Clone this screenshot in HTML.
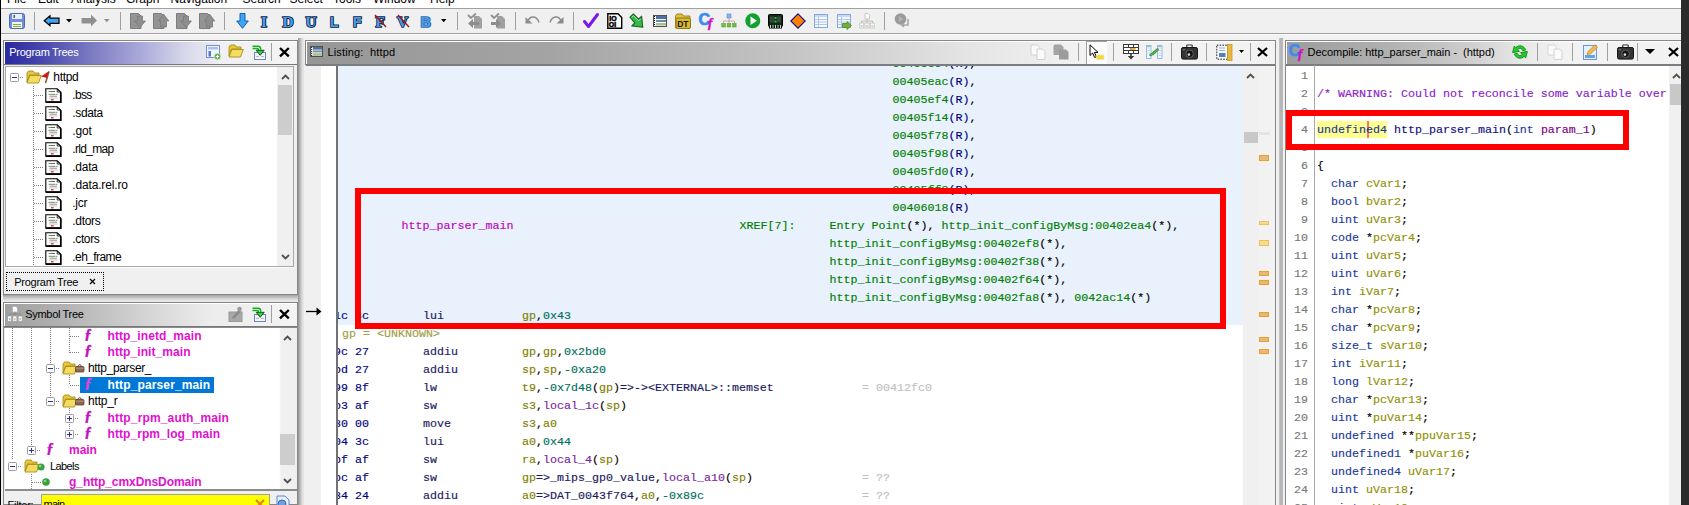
<!DOCTYPE html><html><head><meta charset="utf-8"><title>Ghidra</title><style>
html,body{margin:0;padding:0}
body{width:1689px;height:505px;overflow:hidden;position:relative;background:#f0f0f0;font-family:"Liberation Sans",sans-serif;font-size:12px;color:#000}
.a{position:absolute}
.t{position:absolute;white-space:pre;line-height:18px;height:18px}
.m{position:absolute;white-space:pre;font-family:"Liberation Mono",monospace;font-size:11.67px;line-height:18px;height:18px;margin-top:1px;-webkit-text-stroke:0.15px}
.sep{position:absolute;width:1px;background:#a0a0a0}
.g{color:#008000}.b{color:#000080}.k{color:#000}.p{color:#c000c0}.o{color:#808000}.tl{color:#00705c}.pu{color:#7a1fa0}.gy{color:#c0c0c0}.dk{color:#1a1a60}
.bm{font-weight:bold;color:#e010d0}
.ty{color:#1a3a9a}.vr{color:#909000}.fn{color:#101080}.pu2{color:#800080}
.L{position:absolute;font-family:"Liberation Serif",serif;font-weight:bold;font-size:15.5px;line-height:18px;color:#3d9ff2;-webkit-text-stroke:1.7px #141430;paint-order:stroke fill}
svg{position:absolute;overflow:visible}
</style></head><body>
<div class="a" style="left:0px;top:0px;width:1689px;height:8px;background:#fff;"></div>
<div class="t" style="left:7px;top:-10px;font-size:12px">File</div>
<div class="t" style="left:38px;top:-10px;font-size:12px">Edit</div>
<div class="t" style="left:71px;top:-10px;font-size:12px">Analysis</div>
<div class="t" style="left:126px;top:-10px;font-size:12px">Graph</div>
<div class="t" style="left:170.5px;top:-10px;font-size:12px">Navigation</div>
<div class="t" style="left:242.6px;top:-10px;font-size:12px">Search</div>
<div class="t" style="left:289.5px;top:-10px;font-size:12px">Select</div>
<div class="t" style="left:333px;top:-10px;font-size:12px">Tools</div>
<div class="t" style="left:373px;top:-10px;font-size:12px">Window</div>
<div class="t" style="left:430px;top:-10px;font-size:12px">Help</div>
<div class="a" style="left:0px;top:8px;width:1689px;height:1px;background:#a0a0a0;"></div>
<div class="a" style="left:0px;top:9px;width:1689px;height:24px;background:#f0f0f0;"></div>
<div class="a" style="left:0px;top:33px;width:1689px;height:1px;background:#a0a0a0;"></div>
<div class="a" style="left:0px;top:34px;width:1689px;height:1px;background:#fcfcfc;"></div>
<div class="a" style="left:0px;top:35px;width:1689px;height:5px;background:#f2f2f2;"></div>
<svg style="left:9px;top:13px" width="16" height="16" viewBox="0 0 16 16"><rect x="0.5" y="0.5" width="15" height="15" rx="2" fill="#6f8fd8" stroke="#4a68b8"/><rect x="3" y="1" width="10" height="5" fill="#e8eefc"/><rect x="4.5" y="2" width="1.5" height="3" fill="#556"/><rect x="3" y="9" width="10" height="6" fill="#f4f8f0"/><rect x="4" y="11" width="8" height="1" fill="#80b040"/><rect x="4" y="13" width="8" height="1" fill="#80b040"/></svg>
<div class="sep" style="left:34px;top:12px;height:18px;background:#a0a0a0"></div>
<svg style="left:43px;top:14px" width="18" height="14" viewBox="0 0 18 14"><path d="M1.2 6.8 L7 1.8 L7 4.2 L16 4.2 L16 9.4 L7 9.4 L7 11.8 Z" fill="#3ea4f4" stroke="#000" stroke-width="1.2" stroke-linejoin="miter"/></svg>
<svg style="left:66px;top:19px" width="6" height="4" viewBox="0 0 6 4"><path d="M0 0 L6 0 L3 3.5Z" fill="#000"/></svg>
<svg style="left:81px;top:14px" width="17" height="14" viewBox="0 0 17 14"><path d="M16 6.5 L10 0.5 L10 4 L0.5 4 L0.5 9.5 L10 9.5 L10 12.5 Z" fill="#909090"/></svg>
<svg style="left:103.5px;top:19px" width="6" height="4" viewBox="0 0 6 4"><path d="M0 0 L5.6 0 L2.8 3.2Z" fill="#909090"/></svg>
<div class="sep" style="left:120px;top:12px;height:18px;background:#a0a0a0"></div>
<svg style="left:130px;top:13px" width="16" height="16" viewBox="0 0 16 16"><path d="M0.5 0.5 H8.5 L11 3 V15.5 H0.5Z" fill="#949494" stroke="#7c7c7c"/><path d="M7.5 3 H12.5 V8 H15.5 L10 14.5 L4.5 8 H7.5Z" fill="#8e8e8e" stroke="#7a7a7a" stroke-width="0.8"/></svg>
<svg style="left:153px;top:13px" width="16" height="16" viewBox="0 0 16 16"><path d="M0.5 0.5 H8.5 L11 3 V15.5 H0.5Z" fill="#949494" stroke="#7c7c7c"/><path d="M10.5 1 L15.8 8 H13.5 V14 H7.5 V8 H5.2Z" fill="#8e8e8e" stroke="#7a7a7a" stroke-width="0.8"/></svg>
<svg style="left:176px;top:13px" width="16" height="16" viewBox="0 0 16 16"><path d="M0.5 0.5 H8.5 L11 3 V15.5 H0.5Z" fill="#949494" stroke="#7c7c7c"/><path d="M7.5 3 H12.5 V8 H15.5 L10 14.5 L4.5 8 H7.5Z" fill="#8e8e8e" stroke="#7a7a7a" stroke-width="0.8"/></svg>
<svg style="left:199px;top:13px" width="16" height="16" viewBox="0 0 16 16"><path d="M0.5 0.5 H8.5 L11 3 V15.5 H0.5Z" fill="#949494" stroke="#7c7c7c"/><path d="M10.5 1 L15.8 8 H13.5 V14 H7.5 V8 H5.2Z" fill="#8e8e8e" stroke="#7a7a7a" stroke-width="0.8"/></svg>
<div class="sep" style="left:224px;top:12px;height:18px;background:#a0a0a0"></div>
<svg style="left:236px;top:13px" width="13" height="16" viewBox="0 0 13 16"><path d="M4 0.5 H9 V8 H12.3 L6.5 15.3 L0.7 8 H4Z" fill="#3ea4f4" stroke="#1060b0" stroke-width="1"/></svg>
<div class="L" style="left:261px;top:12.5px;">I</div>
<div class="L" style="left:282.5px;top:12.5px;">D</div>
<div class="L" style="left:305.5px;top:12.5px;">U</div>
<div class="L" style="left:330px;top:12.5px;font-family:'Liberation Sans',sans-serif;font-size:14px;">L</div>
<div class="L" style="left:353px;top:12.5px;font-family:'Liberation Sans',sans-serif;font-size:14px;">F</div>
<div class="L" style="left:375.5px;top:12.5px;">F</div>
<div class="L" style="left:397px;top:12.5px;">V</div>
<div class="L" style="left:420.5px;top:12.5px;font-family:'Liberation Sans',sans-serif;font-size:14.5px;-webkit-text-stroke:1.7px #2c68b0;color:#4a9ae8">B</div>
<svg style="left:374px;top:14px" width="14" height="14" viewBox="0 0 14 14"><path d="M1 1 L12 13" stroke="#a01818" stroke-width="1.4"/></svg>
<svg style="left:397px;top:14px" width="14" height="14" viewBox="0 0 14 14"><path d="M1 1 L12 13" stroke="#a01818" stroke-width="1.4"/></svg>
<svg style="left:441px;top:19px" width="6" height="4" viewBox="0 0 6 4"><path d="M0 0 L5.4 0 L2.7 3.2Z" fill="#000"/></svg>
<div class="sep" style="left:457px;top:12px;height:18px;background:#a0a0a0"></div>
<svg style="left:467px;top:13px" width="16" height="16" viewBox="0 0 16 16"><path d="M7 3 H12 L15 6 V15.5 H7Z" fill="#a0a0a0"/><path d="M1 2 L4 5 L9 0.5" stroke="#909090" stroke-width="1.8" fill="none"/><path d="M1 10.5 L6 6 V9 H12 V12 H6 V15Z" fill="#8c8c8c"/></svg>
<svg style="left:490px;top:13px" width="16" height="16" viewBox="0 0 16 16"><path d="M7 3 H12 L15 6 V15.5 H7Z" fill="#a0a0a0"/><path d="M1 2 L4 5 L9 0.5" stroke="#909090" stroke-width="1.8" fill="none"/><path d="M11 10.5 L6 6 V9 H1 V12 H6 V15Z" fill="#8c8c8c"/></svg>
<div class="sep" style="left:515px;top:12px;height:18px;background:#a0a0a0"></div>
<svg style="left:525px;top:15px" width="16" height="11" viewBox="0 0 16 11"><path d="M3 6 C5 0.5 12 0.5 14 7.5" stroke="#8c8c8c" stroke-width="1.4" fill="none"/><path d="M0.5 2 V8.5 H7.5Z" fill="#8c8c8c"/></svg>
<svg style="left:548px;top:15px" width="16" height="11" viewBox="0 0 16 11"><path d="M13 6 C11 0.5 4 0.5 2 7.5" stroke="#8c8c8c" stroke-width="1.4" fill="none"/><path d="M15.5 2 V8.5 H8.5Z" fill="#8c8c8c"/></svg>
<div class="sep" style="left:573px;top:12px;height:18px;background:#a0a0a0"></div>
<svg style="left:583px;top:13px" width="17" height="16" viewBox="0 0 17 16"><path d="M1.5 8.5 L5.5 13.5 L14.5 1.5" stroke="#7a18e8" stroke-width="3" fill="none" stroke-linejoin="round" stroke-linecap="round"/></svg>
<svg style="left:607px;top:13px" width="16" height="16" viewBox="0 0 16 16"><path d="M0.8 0.8 H11 L14.7 4.5 V15.2 H0.8Z" fill="#fff" stroke="#000" stroke-width="1.4"/><text x="2.2" y="7.6" font-family="Liberation Sans" font-weight="bold" font-size="7" fill="#000" stroke="#000" stroke-width="0.5">IO</text><text x="1.8" y="14" font-family="Liberation Sans" font-weight="bold" font-size="7" fill="#000" stroke="#000" stroke-width="0.5">OI</text></svg>
<svg style="left:629px;top:13px" width="16" height="16" viewBox="0 0 16 16"><path d="M1 4.2 L4.4 1 L9.6 6.2 L12.6 3.2 L13.8 14.2 L2.8 13 L5.8 10 Z" fill="#38b848" stroke="#146424" stroke-width="1.1" stroke-linejoin="round"/><path d="M2.6 4.3 L4.4 2.6 L9.6 7.8 L11.6 5.8" fill="none" stroke="#c8f0c8" stroke-width="0.8"/></svg>
<svg style="left:653px;top:15px" width="14" height="12" viewBox="0 0 14 12"><rect x="0.5" y="0.5" width="13" height="11" fill="#f8f8f8" stroke="#505050"/><rect x="3" y="1" width="10" height="3" fill="#5070a0"/><rect x="3" y="5" width="10" height="2" fill="#7088a8"/><rect x="3" y="8" width="10" height="2.5" fill="#a8c090"/><path d="M1.5 1 V11" stroke="#000" stroke-dasharray="1 1"/></svg>
<svg style="left:675px;top:13px" width="16" height="16" viewBox="0 0 16 16"><path d="M0.5 3 L2 1 H7 L8.5 3 H15 V15 H0.5Z" fill="#e0c040" stroke="#a08820"/><rect x="1" y="5" width="14.5" height="10.5" rx="1.5" fill="#d8b830" stroke="#8a7418"/><text x="2.2" y="14" font-family="Liberation Sans" font-weight="bold" font-size="8.5" fill="#201800">DT</text></svg>
<div class="a" style="left:698.5px;top:11px;font:bold 16px/18px 'Liberation Sans',sans-serif;color:#3c8cf0;-webkit-text-stroke:0.7px #3c8cf0">C</div>
<div class="a" style="left:708px;top:16px;font:italic bold 13px/14px 'Liberation Serif',serif;color:#d010c8;-webkit-text-stroke:0.5px #d010c8">f</div>
<svg style="left:721px;top:13px" width="16" height="16" viewBox="0 0 16 16"><rect x="6" y="1" width="4" height="4" fill="#88b8f0" stroke="#5088d0" stroke-width="0.6"/><path d="M8 5 V8 M2.5 10 V8 H13.5 V10 M8 8 V10" stroke="#d09090" stroke-width="0.8" fill="none"/><rect x="0.8" y="10.5" width="3.5" height="3.5" fill="#70c040" stroke="#50a030" stroke-width="0.6"/><rect x="6.2" y="10.5" width="3.5" height="3.5" fill="#70c040" stroke="#50a030" stroke-width="0.6"/><rect x="11.6" y="10.5" width="3.5" height="3.5" fill="#70c040" stroke="#50a030" stroke-width="0.6"/></svg>
<svg style="left:744.5px;top:13px" width="15.5" height="15.5" viewBox="0 0 15.5 15.5"><circle cx="7.75" cy="7.75" r="7.5" fill="#12a030"/><path d="M5.5 3.5 L12 7.75 L5.5 12Z" fill="#fff"/></svg>
<svg style="left:768px;top:13.5px" width="15" height="15" viewBox="0 0 15 15"><rect x="0.5" y="0.5" width="14" height="12" rx="1" fill="#083010" stroke="#000"/><rect x="2" y="2.5" width="4" height="6" fill="#404040"/><rect x="9" y="2.5" width="4" height="6" fill="#404040"/><rect x="6.5" y="3" width="2" height="2" fill="#30c040"/><rect x="6.5" y="6.5" width="2" height="2" fill="#30c040"/><path d="M1 12 H14 V14.5 H1Z" fill="#000"/><path d="M2.5 11 V14 M5 11 V14 M7.5 11 V14 M10 11 V14 M12.5 11 V14" stroke="#e8e8e8" stroke-width="0.9"/></svg>
<svg style="left:790px;top:13px" width="16" height="16" viewBox="0 0 16 16"><path d="M8 0.8 L15.2 8 L8 15.2 L0.8 8Z" fill="#ff8000" stroke="#10108a" stroke-width="1.1"/></svg>
<svg style="left:814px;top:14px" width="14" height="14" viewBox="0 0 14 14"><rect x="0.5" y="0.5" width="13" height="13" fill="#f4f8ff" stroke="#88a8e0"/><rect x="1" y="1" width="12" height="2" fill="#c8d8f4"/><path d="M1 5.5 H13 M1 8 H13 M1 10.5 H13 M4.5 3 V13" stroke="#a8c0e8" stroke-width="0.9"/></svg>
<svg style="left:837px;top:14px" width="14" height="14" viewBox="0 0 14 14"><rect x="0.5" y="0.5" width="13" height="13" fill="#f4f8ff" stroke="#88a8e0"/><rect x="1" y="1" width="12" height="2" fill="#c8d8f4"/><path d="M1 5.5 H13 M1 8 H13 M1 10.5 H13 M4.5 3 V13" stroke="#a8c0e8" stroke-width="0.9"/></svg>
<svg style="left:842px;top:21px" width="10" height="9" viewBox="0 0 10 9"><path d="M0.5 2.5 H5 V0.5 L9.5 4.5 L5 8.5 V6.5 H0.5Z" fill="#70b030" stroke="#508820" stroke-width="0.8"/></svg>
<svg style="left:859px;top:13px" width="16" height="16" viewBox="0 0 16 16"><path d="M6 0.5 H9 L10.5 2 V6 H6Z" fill="#fafafa" stroke="#c0c0c0" stroke-width="0.8"/><path d="M8 6 V8 M2.5 10 V8 H13.5 V10 M8 8 V10" stroke="#b8b8b8" stroke-width="0.9" fill="none"/><rect x="0.8" y="10" width="4" height="5" fill="#fafafa" stroke="#c0c0c0" stroke-width="0.8"/><rect x="6" y="10" width="4" height="5" fill="#fafafa" stroke="#c0c0c0" stroke-width="0.8"/><rect x="11.2" y="10" width="4" height="5" fill="#fafafa" stroke="#c0c0c0" stroke-width="0.8"/><rect x="2" y="12" width="1.5" height="2" fill="#c0d8a0"/><rect x="7.2" y="12" width="1.5" height="2" fill="#f0b090"/><rect x="12.4" y="12" width="1.5" height="2" fill="#c0d8a0"/></svg>
<div class="sep" style="left:884px;top:12px;height:18px;background:#a0a0a0"></div>
<svg style="left:894px;top:13px" width="16" height="16" viewBox="0 0 16 16"><circle cx="6.5" cy="6" r="5.8" fill="#9a9a9a"/><path d="M5 3 L9.5 6 L5 9Z" fill="#b4b4b4"/><path d="M14 6 V12 H8 M10 10 L7.5 12 L10 14" stroke="#a8a8a8" stroke-width="1.6" fill="none"/></svg>
<div class="a" style="left:3px;top:40px;width:295px;height:255px;background:#f0f0f0;border:1px solid #868686;box-sizing:border-box"></div>
<div class="a" style="left:4px;top:41px;width:293px;height:24px;background:#fff;"></div>
<div class="a" style="left:5px;top:42px;width:292px;height:22px;background:linear-gradient(93deg,#2828a0 0%,#4848ae 13%,#7c7cc4 30%,#a8a8d8 46%,#d8d8ec 62%,#f0f0f4 74%,#f4f4f4 100%);"></div>
<div class="a" style="left:4px;top:64px;width:293px;height:1px;background:#767676;"></div>
<div class="t" style="left:9.3px;top:43.0px;font-size:11px;letter-spacing:-0.28px;color:#fff;">Program Trees</div>
<svg style="left:206px;top:45px" width="15" height="15" viewBox="0 0 15 15"><rect x="0.5" y="0.5" width="13" height="12" fill="#f0f4fc" stroke="#7090d0"/><rect x="2" y="2" width="10" height="2.5" fill="#a8c0ec"/><rect x="2.5" y="6" width="2.5" height="5.5" fill="#5078c8"/><circle cx="11.5" cy="11.5" r="3.3" fill="#58b040" stroke="#e8f4e0" stroke-width="0.6"/><path d="M9.8 11.5 H13.2 M11.5 9.8 V13.2" stroke="#fff" stroke-width="1.2"/></svg>
<svg style="left:228px;top:44px" width="16" height="14" viewBox="0 0 16 14"><path d="M1 3 L2.5 1 H7 L8.5 3 H13 V5 H3.5 L1 12Z" fill="#e8c838" stroke="#a88c18" stroke-width="0.9"/><path d="M3.8 5.5 H15.3 L12.5 13 H1Z" fill="#f4dc60" stroke="#a88c18" stroke-width="0.9"/></svg>
<svg style="left:252px;top:44.5px" width="15" height="15" viewBox="0 0 15 15"><rect x="2.5" y="7.5" width="11" height="7" fill="#f0f4fc" stroke="#7088b8"/><path d="M4 11.5 H7 M9 11.5 H12" stroke="#c0a0b0" stroke-width="0.8"/><path d="M0.5 1.3 H6.2 Q8.8 1.3 8.8 4.8" stroke="#10b418" stroke-width="1.4" fill="none"/><path d="M0.5 3.5 H5 Q6.6 3.5 6.6 5.2" stroke="#10b418" stroke-width="1.4" fill="none"/><path d="M4.2 5.3 H12.2 L8.2 10.3Z" fill="#20e030" stroke="#102010" stroke-width="0.8"/></svg>
<div class="sep" style="left:271px;top:43px;height:18px;background:#a0a0a0"></div>
<svg style="left:279px;top:47px" width="10" height="10" viewBox="0 0 10 10"><path d="M1 1 L9.8 9.4 M9.8 1 L1 9.4" stroke="#000" stroke-width="2.4" stroke-linecap="butt"/></svg>
<div class="a" style="left:5px;top:66px;width:289px;height:201px;background:#fff;border:1px solid #a8a8a8;box-sizing:border-box"></div>
<div class="a" style="left:277px;top:67px;width:16px;height:199px;background:#f0f0f0;"></div>
<div class="a" style="left:278px;top:85px;width:14px;height:50px;background:#cdcdcd;"></div>
<svg style="left:280.5px;top:74px" width="9" height="6" viewBox="0 0 9 6"><path d="M1 5 L4.5 1.5 L8 5" stroke="#505050" stroke-width="1.8" fill="none"/></svg>
<svg style="left:280.5px;top:254px" width="9" height="6" viewBox="0 0 9 6"><path d="M1 1 L4.5 4.5 L8 1" stroke="#505050" stroke-width="1.8" fill="none"/></svg>
<svg style="left:10.0px;top:73.0px" width="9" height="9" viewBox="0 0 9 9"><rect x="0.5" y="0.5" width="8" height="8" rx="1" fill="#fdfdfd" stroke="#9a9aa8"/><path d="M2 4.5 H7" stroke="#303090" stroke-width="1"/></svg>
<div class="a" style="left:20px;top:77px;width:4px;height:1px;background:repeating-linear-gradient(90deg,#808080 0 1px,transparent 1px 2px);"></div>
<div class="a" style="left:33px;top:86px;width:1px;height:180px;background:repeating-linear-gradient(180deg,#808080 0 1px,transparent 1px 2px);"></div>
<svg style="left:26px;top:70px" width="16" height="14" viewBox="0 0 16 14"><path d="M1 3 L2.5 1 H7 L8.5 3 H13 V5 H3.5 L1 12Z" fill="#e8c838" stroke="#a88c18" stroke-width="0.9"/><path d="M3.8 5.5 H15.3 L12.5 13 H1Z" fill="#f4dc60" stroke="#a88c18" stroke-width="0.9"/></svg>
<svg style="left:40px;top:70px" width="11" height="14" viewBox="0 0 11 14"><path d="M9 1.5 L5.5 13" stroke="#806030" stroke-width="1.6"/><path d="M8.8 1.2 L1 6.5 L7 8Z" fill="#d01818"/></svg>
<div class="t" style="left:53.3px;top:68.0px;font-size:12px;letter-spacing:-0.30px;">httpd</div>
<div class="a" style="left:34px;top:95px;width:10px;height:1px;background:repeating-linear-gradient(90deg,#808080 0 1px,transparent 1px 2px);"></div>
<svg style="left:45px;top:87.5px" width="17" height="15" viewBox="0 0 17 15"><path d="M0.8 0.8 H12.2 L15.6 4 V14 H0.8Z" fill="#fff" stroke="#000" stroke-width="1.1"/><path d="M0.8 14.2 H15.8 V4.2" stroke="#000" stroke-width="1.7" fill="none"/><path d="M12.2 0.8 V4 H15.6" fill="none" stroke="#000" stroke-width="0.8"/><path d="M3.5 3.5 H6" stroke="#70a050" stroke-width="1"/><path d="M6 3.5 H10" stroke="#686868" stroke-width="1"/><path d="M3.5 6.3 H6 M10.5 6.3 H12.5" stroke="#70a050" stroke-width="1"/><path d="M6 6.3 H10" stroke="#808080" stroke-width="1"/><path d="M4.5 8.2 H12" stroke="#909090" stroke-width="1"/><path d="M4 10 H12.5" stroke="#c0c0c0" stroke-width="0.9"/><path d="M6 11.8 H8.6" stroke="#c02020" stroke-width="1.2"/></svg>
<div class="t" style="left:72.3px;top:86.0px;font-size:12px;letter-spacing:-0.70px;">.bss</div>
<div class="a" style="left:34px;top:113px;width:10px;height:1px;background:repeating-linear-gradient(90deg,#808080 0 1px,transparent 1px 2px);"></div>
<svg style="left:45px;top:105.5px" width="17" height="15" viewBox="0 0 17 15"><path d="M0.8 0.8 H12.2 L15.6 4 V14 H0.8Z" fill="#fff" stroke="#000" stroke-width="1.1"/><path d="M0.8 14.2 H15.8 V4.2" stroke="#000" stroke-width="1.7" fill="none"/><path d="M12.2 0.8 V4 H15.6" fill="none" stroke="#000" stroke-width="0.8"/><path d="M3.5 3.5 H6" stroke="#70a050" stroke-width="1"/><path d="M6 3.5 H10" stroke="#686868" stroke-width="1"/><path d="M3.5 6.3 H6 M10.5 6.3 H12.5" stroke="#70a050" stroke-width="1"/><path d="M6 6.3 H10" stroke="#808080" stroke-width="1"/><path d="M4.5 8.2 H12" stroke="#909090" stroke-width="1"/><path d="M4 10 H12.5" stroke="#c0c0c0" stroke-width="0.9"/><path d="M6 11.8 H8.6" stroke="#c02020" stroke-width="1.2"/></svg>
<div class="t" style="left:72.3px;top:104.0px;font-size:12px;letter-spacing:-0.36px;">.sdata</div>
<div class="a" style="left:34px;top:131px;width:10px;height:1px;background:repeating-linear-gradient(90deg,#808080 0 1px,transparent 1px 2px);"></div>
<svg style="left:45px;top:123.5px" width="17" height="15" viewBox="0 0 17 15"><path d="M0.8 0.8 H12.2 L15.6 4 V14 H0.8Z" fill="#fff" stroke="#000" stroke-width="1.1"/><path d="M0.8 14.2 H15.8 V4.2" stroke="#000" stroke-width="1.7" fill="none"/><path d="M12.2 0.8 V4 H15.6" fill="none" stroke="#000" stroke-width="0.8"/><path d="M3.5 3.5 H6" stroke="#70a050" stroke-width="1"/><path d="M6 3.5 H10" stroke="#686868" stroke-width="1"/><path d="M3.5 6.3 H6 M10.5 6.3 H12.5" stroke="#70a050" stroke-width="1"/><path d="M6 6.3 H10" stroke="#808080" stroke-width="1"/><path d="M4.5 8.2 H12" stroke="#909090" stroke-width="1"/><path d="M4 10 H12.5" stroke="#c0c0c0" stroke-width="0.9"/><path d="M6 11.8 H8.6" stroke="#c02020" stroke-width="1.2"/></svg>
<div class="t" style="left:72.3px;top:122.0px;font-size:12px;letter-spacing:-0.20px;">.got</div>
<div class="a" style="left:34px;top:149px;width:10px;height:1px;background:repeating-linear-gradient(90deg,#808080 0 1px,transparent 1px 2px);"></div>
<svg style="left:45px;top:141.5px" width="17" height="15" viewBox="0 0 17 15"><path d="M0.8 0.8 H12.2 L15.6 4 V14 H0.8Z" fill="#fff" stroke="#000" stroke-width="1.1"/><path d="M0.8 14.2 H15.8 V4.2" stroke="#000" stroke-width="1.7" fill="none"/><path d="M12.2 0.8 V4 H15.6" fill="none" stroke="#000" stroke-width="0.8"/><path d="M3.5 3.5 H6" stroke="#70a050" stroke-width="1"/><path d="M6 3.5 H10" stroke="#686868" stroke-width="1"/><path d="M3.5 6.3 H6 M10.5 6.3 H12.5" stroke="#70a050" stroke-width="1"/><path d="M6 6.3 H10" stroke="#808080" stroke-width="1"/><path d="M4.5 8.2 H12" stroke="#909090" stroke-width="1"/><path d="M4 10 H12.5" stroke="#c0c0c0" stroke-width="0.9"/><path d="M6 11.8 H8.6" stroke="#c02020" stroke-width="1.2"/></svg>
<div class="t" style="left:72.3px;top:140.0px;font-size:12px;letter-spacing:-0.70px;">.rld_map</div>
<div class="a" style="left:34px;top:167px;width:10px;height:1px;background:repeating-linear-gradient(90deg,#808080 0 1px,transparent 1px 2px);"></div>
<svg style="left:45px;top:159.5px" width="17" height="15" viewBox="0 0 17 15"><path d="M0.8 0.8 H12.2 L15.6 4 V14 H0.8Z" fill="#fff" stroke="#000" stroke-width="1.1"/><path d="M0.8 14.2 H15.8 V4.2" stroke="#000" stroke-width="1.7" fill="none"/><path d="M12.2 0.8 V4 H15.6" fill="none" stroke="#000" stroke-width="0.8"/><path d="M3.5 3.5 H6" stroke="#70a050" stroke-width="1"/><path d="M6 3.5 H10" stroke="#686868" stroke-width="1"/><path d="M3.5 6.3 H6 M10.5 6.3 H12.5" stroke="#70a050" stroke-width="1"/><path d="M6 6.3 H10" stroke="#808080" stroke-width="1"/><path d="M4.5 8.2 H12" stroke="#909090" stroke-width="1"/><path d="M4 10 H12.5" stroke="#c0c0c0" stroke-width="0.9"/><path d="M6 11.8 H8.6" stroke="#c02020" stroke-width="1.2"/></svg>
<div class="t" style="left:72.3px;top:158.0px;font-size:12px;letter-spacing:-0.27px;">.data</div>
<div class="a" style="left:34px;top:185px;width:10px;height:1px;background:repeating-linear-gradient(90deg,#808080 0 1px,transparent 1px 2px);"></div>
<svg style="left:45px;top:177.5px" width="17" height="15" viewBox="0 0 17 15"><path d="M0.8 0.8 H12.2 L15.6 4 V14 H0.8Z" fill="#fff" stroke="#000" stroke-width="1.1"/><path d="M0.8 14.2 H15.8 V4.2" stroke="#000" stroke-width="1.7" fill="none"/><path d="M12.2 0.8 V4 H15.6" fill="none" stroke="#000" stroke-width="0.8"/><path d="M3.5 3.5 H6" stroke="#70a050" stroke-width="1"/><path d="M6 3.5 H10" stroke="#686868" stroke-width="1"/><path d="M3.5 6.3 H6 M10.5 6.3 H12.5" stroke="#70a050" stroke-width="1"/><path d="M6 6.3 H10" stroke="#808080" stroke-width="1"/><path d="M4.5 8.2 H12" stroke="#909090" stroke-width="1"/><path d="M4 10 H12.5" stroke="#c0c0c0" stroke-width="0.9"/><path d="M6 11.8 H8.6" stroke="#c02020" stroke-width="1.2"/></svg>
<div class="t" style="left:72.3px;top:176.0px;font-size:12px;letter-spacing:-0.16px;">.data.rel.ro</div>
<div class="a" style="left:34px;top:203px;width:10px;height:1px;background:repeating-linear-gradient(90deg,#808080 0 1px,transparent 1px 2px);"></div>
<svg style="left:45px;top:195.5px" width="17" height="15" viewBox="0 0 17 15"><path d="M0.8 0.8 H12.2 L15.6 4 V14 H0.8Z" fill="#fff" stroke="#000" stroke-width="1.1"/><path d="M0.8 14.2 H15.8 V4.2" stroke="#000" stroke-width="1.7" fill="none"/><path d="M12.2 0.8 V4 H15.6" fill="none" stroke="#000" stroke-width="0.8"/><path d="M3.5 3.5 H6" stroke="#70a050" stroke-width="1"/><path d="M6 3.5 H10" stroke="#686868" stroke-width="1"/><path d="M3.5 6.3 H6 M10.5 6.3 H12.5" stroke="#70a050" stroke-width="1"/><path d="M6 6.3 H10" stroke="#808080" stroke-width="1"/><path d="M4.5 8.2 H12" stroke="#909090" stroke-width="1"/><path d="M4 10 H12.5" stroke="#c0c0c0" stroke-width="0.9"/><path d="M6 11.8 H8.6" stroke="#c02020" stroke-width="1.2"/></svg>
<div class="t" style="left:72.3px;top:194.0px;font-size:12px;letter-spacing:-0.27px;">.jcr</div>
<div class="a" style="left:34px;top:221px;width:10px;height:1px;background:repeating-linear-gradient(90deg,#808080 0 1px,transparent 1px 2px);"></div>
<svg style="left:45px;top:213.5px" width="17" height="15" viewBox="0 0 17 15"><path d="M0.8 0.8 H12.2 L15.6 4 V14 H0.8Z" fill="#fff" stroke="#000" stroke-width="1.1"/><path d="M0.8 14.2 H15.8 V4.2" stroke="#000" stroke-width="1.7" fill="none"/><path d="M12.2 0.8 V4 H15.6" fill="none" stroke="#000" stroke-width="0.8"/><path d="M3.5 3.5 H6" stroke="#70a050" stroke-width="1"/><path d="M6 3.5 H10" stroke="#686868" stroke-width="1"/><path d="M3.5 6.3 H6 M10.5 6.3 H12.5" stroke="#70a050" stroke-width="1"/><path d="M6 6.3 H10" stroke="#808080" stroke-width="1"/><path d="M4.5 8.2 H12" stroke="#909090" stroke-width="1"/><path d="M4 10 H12.5" stroke="#c0c0c0" stroke-width="0.9"/><path d="M6 11.8 H8.6" stroke="#c02020" stroke-width="1.2"/></svg>
<div class="t" style="left:72.3px;top:212.0px;font-size:12px;letter-spacing:-0.30px;">.dtors</div>
<div class="a" style="left:34px;top:239px;width:10px;height:1px;background:repeating-linear-gradient(90deg,#808080 0 1px,transparent 1px 2px);"></div>
<svg style="left:45px;top:231.5px" width="17" height="15" viewBox="0 0 17 15"><path d="M0.8 0.8 H12.2 L15.6 4 V14 H0.8Z" fill="#fff" stroke="#000" stroke-width="1.1"/><path d="M0.8 14.2 H15.8 V4.2" stroke="#000" stroke-width="1.7" fill="none"/><path d="M12.2 0.8 V4 H15.6" fill="none" stroke="#000" stroke-width="0.8"/><path d="M3.5 3.5 H6" stroke="#70a050" stroke-width="1"/><path d="M6 3.5 H10" stroke="#686868" stroke-width="1"/><path d="M3.5 6.3 H6 M10.5 6.3 H12.5" stroke="#70a050" stroke-width="1"/><path d="M6 6.3 H10" stroke="#808080" stroke-width="1"/><path d="M4.5 8.2 H12" stroke="#909090" stroke-width="1"/><path d="M4 10 H12.5" stroke="#c0c0c0" stroke-width="0.9"/><path d="M6 11.8 H8.6" stroke="#c02020" stroke-width="1.2"/></svg>
<div class="t" style="left:72.3px;top:230.0px;font-size:12px;letter-spacing:-0.37px;">.ctors</div>
<div class="a" style="left:34px;top:257px;width:10px;height:1px;background:repeating-linear-gradient(90deg,#808080 0 1px,transparent 1px 2px);"></div>
<svg style="left:45px;top:249.5px" width="17" height="15" viewBox="0 0 17 15"><path d="M0.8 0.8 H12.2 L15.6 4 V14 H0.8Z" fill="#fff" stroke="#000" stroke-width="1.1"/><path d="M0.8 14.2 H15.8 V4.2" stroke="#000" stroke-width="1.7" fill="none"/><path d="M12.2 0.8 V4 H15.6" fill="none" stroke="#000" stroke-width="0.8"/><path d="M3.5 3.5 H6" stroke="#70a050" stroke-width="1"/><path d="M6 3.5 H10" stroke="#686868" stroke-width="1"/><path d="M3.5 6.3 H6 M10.5 6.3 H12.5" stroke="#70a050" stroke-width="1"/><path d="M6 6.3 H10" stroke="#808080" stroke-width="1"/><path d="M4.5 8.2 H12" stroke="#909090" stroke-width="1"/><path d="M4 10 H12.5" stroke="#c0c0c0" stroke-width="0.9"/><path d="M6 11.8 H8.6" stroke="#c02020" stroke-width="1.2"/></svg>
<div class="t" style="left:72.3px;top:248.0px;font-size:12px;letter-spacing:-0.58px;">.eh_frame</div>
<div class="a" style="left:5px;top:267px;width:289px;height:1px;background:#fff;"></div>
<div class="a" style="left:6px;top:272px;width:98px;height:19px;background:#f0f0f0;border:1px dotted #000;box-sizing:border-box"></div>
<div class="t" style="left:14.3px;top:272.5px;font-size:11px;letter-spacing:-0.28px;">Program Tree</div>
<svg style="left:89px;top:278px" width="7" height="7" viewBox="0 0 7 7"><path d="M1 1 L6 6 M6 1 L1 6" stroke="#000" stroke-width="1.2"/></svg>
<div class="a" style="left:3px;top:295px;width:295px;height:7px;background:linear-gradient(180deg,#a0a0a0 0,#c4c4c4 35%,#e4e4e4 75%,#ececec 100%);"></div>
<div class="a" style="left:3px;top:302px;width:295px;height:203px;background:#f0f0f0;border:1px solid #868686;box-sizing:border-box"></div>
<div class="a" style="left:4px;top:303px;width:293px;height:24px;background:#fff;"></div>
<div class="a" style="left:5px;top:304px;width:292px;height:22px;background:linear-gradient(90deg,#a0a0a0 0%,#b2b2b2 20%,#d0d0d0 45%,#ececec 70%,#f4f4f4 100%);"></div>
<div class="a" style="left:4px;top:326px;width:293px;height:1px;background:#767676;"></div>
<div class="a" style="left:4px;top:327px;width:293px;height:1px;background:#8c8c8c;"></div>
<div class="t" style="left:25.3px;top:305.0px;font-size:11px;letter-spacing:-0.32px;">Symbol Tree</div>
<svg style="left:7px;top:306px" width="16" height="16" viewBox="0 0 16 16"><path d="M5.5 0.5 H9 L10.5 2 V6 H5.5Z" fill="#fff" stroke="#b0b0b0" stroke-width="0.8"/><path d="M8 6 V8 M2.5 10 V8 H13.5 V10 M8 8 V10" stroke="#888" stroke-width="0.9" fill="none"/><rect x="0.6" y="10" width="4" height="5.4" fill="#fff" stroke="#a0a0a0" stroke-width="0.8"/><rect x="5.9" y="10" width="4" height="5.4" fill="#fff" stroke="#a0a0a0" stroke-width="0.8"/><rect x="11.2" y="10" width="4" height="5.4" fill="#fff" stroke="#a0a0a0" stroke-width="0.8"/><rect x="1.8" y="12" width="1.6" height="2.4" fill="#90b8e8"/><rect x="7.1" y="12" width="1.6" height="2.4" fill="#f0c090"/><rect x="12.4" y="12" width="1.6" height="2.4" fill="#b0d890"/></svg>
<svg style="left:228px;top:306px" width="16" height="16" viewBox="0 0 16 16"><rect x="1" y="6" width="13" height="9.5" fill="#a8a8a8" stroke="#989898"/><path d="M4 13 L5 10 L11 3.5 L13 5.5 L7 12Z" fill="#8c8c8c"/><circle cx="11.5" cy="3" r="2.3" fill="#9c9c9c"/></svg>
<svg style="left:252px;top:306.5px" width="15" height="15" viewBox="0 0 15 15"><rect x="2.5" y="7.5" width="11" height="7" fill="#f0f4fc" stroke="#7088b8"/><path d="M4 11.5 H7 M9 11.5 H12" stroke="#c0a0b0" stroke-width="0.8"/><path d="M0.5 1.3 H6.2 Q8.8 1.3 8.8 4.8" stroke="#10b418" stroke-width="1.4" fill="none"/><path d="M0.5 3.5 H5 Q6.6 3.5 6.6 5.2" stroke="#10b418" stroke-width="1.4" fill="none"/><path d="M4.2 5.3 H12.2 L8.2 10.3Z" fill="#20e030" stroke="#102010" stroke-width="0.8"/></svg>
<div class="sep" style="left:271px;top:305px;height:18px;background:#a0a0a0"></div>
<svg style="left:279px;top:309px" width="10" height="10" viewBox="0 0 10 10"><path d="M1 1 L9.8 9.4 M9.8 1 L1 9.4" stroke="#000" stroke-width="2.4" stroke-linecap="butt"/></svg>
<div class="a" style="left:5px;top:328px;width:291px;height:161px;background:#fff;"></div>
<div class="a" style="left:281px;top:328px;width:15px;height:161px;background:#f0f0f0;"></div>
<div class="a" style="left:279px;top:328px;width:2px;height:161px;background:linear-gradient(90deg,#fff,#f0f0f0);"></div>
<div class="a" style="left:280px;top:434px;width:15px;height:31px;background:#cdcdcd;"></div>
<svg style="left:283.0px;top:334.5px" width="9" height="6" viewBox="0 0 9 6"><path d="M1 5 L4.5 1.5 L8 5" stroke="#505050" stroke-width="1.8" fill="none"/></svg>
<svg style="left:283.0px;top:477.5px" width="9" height="6" viewBox="0 0 9 6"><path d="M1 1 L4.5 4.5 L8 1" stroke="#505050" stroke-width="1.8" fill="none"/></svg>
<div class="a" style="left:5px;top:489px;width:292px;height:2px;background:#8c8c8c;"></div>
<div class="a" style="left:12px;top:328px;width:1px;height:132px;background:repeating-linear-gradient(180deg,#808080 0 1px,transparent 1px 2px);"></div>
<div class="a" style="left:31px;top:328px;width:1px;height:118px;background:repeating-linear-gradient(180deg,#808080 0 1px,transparent 1px 2px);"></div>
<div class="a" style="left:50px;top:328px;width:1px;height:36px;background:repeating-linear-gradient(180deg,#808080 0 1px,transparent 1px 2px);"></div>
<div class="a" style="left:50px;top:373px;width:1px;height:24px;background:repeating-linear-gradient(180deg,#808080 0 1px,transparent 1px 2px);"></div>
<div class="a" style="left:69px;top:328px;width:1px;height:25px;background:repeating-linear-gradient(180deg,#808080 0 1px,transparent 1px 2px);"></div>
<div class="a" style="left:70px;top:336px;width:9px;height:1px;background:repeating-linear-gradient(90deg,#808080 0 1px,transparent 1px 2px);"></div>
<div class="a" style="left:70px;top:352px;width:9px;height:1px;background:repeating-linear-gradient(90deg,#808080 0 1px,transparent 1px 2px);"></div>
<div class="a" style="left:69px;top:373px;width:1px;height:12px;background:repeating-linear-gradient(180deg,#808080 0 1px,transparent 1px 2px);"></div>
<div class="a" style="left:70px;top:385px;width:9px;height:1px;background:repeating-linear-gradient(90deg,#808080 0 1px,transparent 1px 2px);"></div>
<div class="a" style="left:69px;top:406px;width:1px;height:28px;background:repeating-linear-gradient(180deg,#808080 0 1px,transparent 1px 2px);"></div>
<div class="a" style="left:83px;top:325.5px;font:italic bold 14px/18px 'Liberation Serif',serif;color:#c010c0;-webkit-text-stroke:0.5px #c010c0;width:10px;text-align:center">ƒ</div>
<div class="t bm" style="left:107.5px;top:327.0px;font-size:12px;letter-spacing:0.10px;">http_inetd_main</div>
<div class="a" style="left:83px;top:341.5px;font:italic bold 14px/18px 'Liberation Serif',serif;color:#c010c0;-webkit-text-stroke:0.5px #c010c0;width:10px;text-align:center">ƒ</div>
<div class="t bm" style="left:107.5px;top:343.0px;font-size:12px;letter-spacing:0.08px;">http_init_main</div>
<svg style="left:46.0px;top:364.0px" width="9" height="9" viewBox="0 0 9 9"><rect x="0.5" y="0.5" width="8" height="8" rx="1" fill="#fdfdfd" stroke="#9a9aa8"/><path d="M2 4.5 H7" stroke="#303090" stroke-width="1"/></svg>
<div class="a" style="left:56px;top:368px;width:4px;height:1px;background:repeating-linear-gradient(90deg,#808080 0 1px,transparent 1px 2px);"></div>
<svg style="left:62px;top:361px" width="16" height="14" viewBox="0 0 16 14"><path d="M1 3 L2.5 1 H7 L8.5 3 H13 V5 H3.5 L1 12Z" fill="#e8c838" stroke="#a88c18" stroke-width="0.9"/><path d="M3.8 5.5 H15.3 L12.5 13 H1Z" fill="#f4dc60" stroke="#a88c18" stroke-width="0.9"/></svg>
<svg style="left:75px;top:363px" width="10" height="10" viewBox="0 0 10 10"><rect x="0.5" y="3.5" width="8.5" height="5.5" rx="1" fill="#8a6a50" stroke="#5a4030" stroke-width="0.8"/><path d="M2.5 3.5 Q4.7 0 7 3.5" stroke="#5a4030" stroke-width="1" fill="none"/><path d="M0.8 5.2 H8.8" stroke="#c0a080" stroke-width="0.8"/></svg>
<div class="t" style="left:88.0px;top:359.0px;font-size:12px;letter-spacing:-0.35px;">http_parser_</div>
<div class="a" style="left:80px;top:377px;width:134px;height:16px;background:#0078d7;"></div>
<div class="a" style="left:83px;top:374.5px;font:italic bold 14px/18px 'Liberation Serif',serif;color:#e040e0;-webkit-text-stroke:0.5px #e040e0;width:10px;text-align:center">ƒ</div>
<div class="t" style="left:107.5px;top:376.0px;font-size:12px;letter-spacing:0.13px;font-weight:bold;color:#fff">http_parser_main</div>
<svg style="left:46.0px;top:397.0px" width="9" height="9" viewBox="0 0 9 9"><rect x="0.5" y="0.5" width="8" height="8" rx="1" fill="#fdfdfd" stroke="#9a9aa8"/><path d="M2 4.5 H7" stroke="#303090" stroke-width="1"/></svg>
<div class="a" style="left:56px;top:401px;width:4px;height:1px;background:repeating-linear-gradient(90deg,#808080 0 1px,transparent 1px 2px);"></div>
<svg style="left:62px;top:394px" width="16" height="14" viewBox="0 0 16 14"><path d="M1 3 L2.5 1 H7 L8.5 3 H13 V5 H3.5 L1 12Z" fill="#e8c838" stroke="#a88c18" stroke-width="0.9"/><path d="M3.8 5.5 H15.3 L12.5 13 H1Z" fill="#f4dc60" stroke="#a88c18" stroke-width="0.9"/></svg>
<svg style="left:75px;top:396px" width="10" height="10" viewBox="0 0 10 10"><rect x="0.5" y="3.5" width="8.5" height="5.5" rx="1" fill="#8a6a50" stroke="#5a4030" stroke-width="0.8"/><path d="M2.5 3.5 Q4.7 0 7 3.5" stroke="#5a4030" stroke-width="1" fill="none"/><path d="M0.8 5.2 H8.8" stroke="#c0a080" stroke-width="0.8"/></svg>
<div class="t" style="left:88.0px;top:392.0px;font-size:12px;letter-spacing:-0.18px;">http_r</div>
<svg style="left:65.0px;top:414.0px" width="9" height="9" viewBox="0 0 9 9"><rect x="0.5" y="0.5" width="8" height="8" rx="1" fill="#fdfdfd" stroke="#9a9aa8"/><path d="M2 4.5 H7" stroke="#303090" stroke-width="1"/><path d="M4.5 2 V7" stroke="#303090" stroke-width="1"/></svg>
<div class="a" style="left:75px;top:418px;width:4px;height:1px;background:repeating-linear-gradient(90deg,#808080 0 1px,transparent 1px 2px);"></div>
<div class="a" style="left:83px;top:407.5px;font:italic bold 14px/18px 'Liberation Serif',serif;color:#c010c0;-webkit-text-stroke:0.5px #c010c0;width:10px;text-align:center">ƒ</div>
<div class="t bm" style="left:107.5px;top:409.0px;font-size:12px;letter-spacing:0.16px;">http_rpm_auth_main</div>
<svg style="left:65.0px;top:430.0px" width="9" height="9" viewBox="0 0 9 9"><rect x="0.5" y="0.5" width="8" height="8" rx="1" fill="#fdfdfd" stroke="#9a9aa8"/><path d="M2 4.5 H7" stroke="#303090" stroke-width="1"/><path d="M4.5 2 V7" stroke="#303090" stroke-width="1"/></svg>
<div class="a" style="left:75px;top:434px;width:4px;height:1px;background:repeating-linear-gradient(90deg,#808080 0 1px,transparent 1px 2px);"></div>
<div class="a" style="left:83px;top:423.5px;font:italic bold 14px/18px 'Liberation Serif',serif;color:#c010c0;-webkit-text-stroke:0.5px #c010c0;width:10px;text-align:center">ƒ</div>
<div class="t bm" style="left:107.5px;top:425.0px;font-size:12px;letter-spacing:0.07px;">http_rpm_log_main</div>
<svg style="left:27.0px;top:446.0px" width="9" height="9" viewBox="0 0 9 9"><rect x="0.5" y="0.5" width="8" height="8" rx="1" fill="#fdfdfd" stroke="#9a9aa8"/><path d="M2 4.5 H7" stroke="#303090" stroke-width="1"/><path d="M4.5 2 V7" stroke="#303090" stroke-width="1"/></svg>
<div class="a" style="left:37px;top:450px;width:4px;height:1px;background:repeating-linear-gradient(90deg,#808080 0 1px,transparent 1px 2px);"></div>
<div class="a" style="left:45px;top:439.5px;font:italic bold 14px/18px 'Liberation Serif',serif;color:#c010c0;-webkit-text-stroke:0.5px #c010c0;width:10px;text-align:center">ƒ</div>
<div class="t bm" style="left:69.1px;top:441.0px;font-size:12px;letter-spacing:-0.07px;">main</div>
<svg style="left:8.0px;top:462.0px" width="9" height="9" viewBox="0 0 9 9"><rect x="0.5" y="0.5" width="8" height="8" rx="1" fill="#fdfdfd" stroke="#9a9aa8"/><path d="M2 4.5 H7" stroke="#303090" stroke-width="1"/></svg>
<div class="a" style="left:18px;top:466px;width:4px;height:1px;background:repeating-linear-gradient(90deg,#808080 0 1px,transparent 1px 2px);"></div>
<svg style="left:24px;top:459px" width="16" height="14" viewBox="0 0 16 14"><path d="M1 3 L2.5 1 H7 L8.5 3 H13 V5 H3.5 L1 12Z" fill="#e8c838" stroke="#a88c18" stroke-width="0.9"/><path d="M3.8 5.5 H15.3 L12.5 13 H1Z" fill="#f4dc60" stroke="#a88c18" stroke-width="0.9"/></svg>
<svg style="left:37px;top:462.5px" width="8" height="8" viewBox="0 0 8 8"><circle cx="4" cy="4" r="3.6" fill="#40a040"/><circle cx="3" cy="3" r="1.3" fill="#90d890"/></svg>
<div class="t" style="left:49.9px;top:457.0px;font-size:11px;letter-spacing:-0.56px;">Labels</div>
<div class="a" style="left:31px;top:474px;width:1px;height:16px;background:repeating-linear-gradient(180deg,#808080 0 1px,transparent 1px 2px);"></div>
<div class="a" style="left:32px;top:482px;width:9px;height:1px;background:repeating-linear-gradient(90deg,#808080 0 1px,transparent 1px 2px);"></div>
<svg style="left:41.5px;top:478px" width="8" height="8" viewBox="0 0 8 8"><circle cx="4" cy="4" r="3.8" fill="#38a038"/><circle cx="3" cy="3" r="1.3" fill="#88d488"/></svg>
<div class="t bm" style="left:69.1px;top:473.0px;font-size:12px;letter-spacing:-0.08px;">g_http_cmxDnsDomain</div>
<div class="t" style="left:7.5px;top:495.5px;font-size:11px;letter-spacing:-0.22px;">Filter:</div>
<div class="a" style="left:41px;top:494px;width:229px;height:12px;background:#ffff00;border:1px solid #a0a0a0;box-sizing:border-box"></div>
<div class="t" style="left:43.5px;top:494.5px;font-size:11px;letter-spacing:-0.78px;">main</div>
<svg style="left:255px;top:498.5px" width="10" height="8" viewBox="0 0 10 8"><path d="M1 1 L9 9 M9 1 L1 9" stroke="#e08020" stroke-width="2"/></svg>
<svg style="left:275px;top:495px" width="16" height="12" viewBox="0 0 16 12"><path d="M2 1 H10 L14 5 V12 H2Z" fill="#e8f0fc" stroke="#5888d0"/><circle cx="7" cy="9" r="4" fill="#70a0e0" stroke="#3868b8"/></svg>
<div class="a" style="left:298px;top:38px;width:7px;height:467px;background:linear-gradient(90deg,#929292 0,#b8b8b8 30%,#dcdcdc 60%,#f0f0f0 100%);"></div>
<div class="a" style="left:305px;top:40px;width:971px;height:465px;background:#f0f0f0;"></div>
<div class="a" style="left:305px;top:40px;width:971px;height:25px;background:#f0f0f0;border:1px solid #868686;box-sizing:border-box"></div>
<div class="a" style="left:306px;top:41px;width:969px;height:24px;background:#fff;"></div>
<div class="a" style="left:307px;top:42px;width:968px;height:22px;background:linear-gradient(90deg,#969696 0%,#a4a4a4 25%,#c4c4c4 50%,#e4e4e4 68%,#f2f2f2 80%,#f2f2f2 100%);"></div>
<div class="a" style="left:306px;top:64px;width:969px;height:1px;background:#767676;"></div>
<svg style="left:310px;top:46px" width="13" height="11" viewBox="0 0 13 11"><rect x="0.5" y="0.5" width="12" height="10" fill="#f4f4f4" stroke="#505050"/><rect x="3" y="1" width="9" height="2.6" fill="#5070a0"/><rect x="3" y="4.4" width="9" height="2" fill="#7890b0"/><rect x="3" y="7.2" width="9" height="2.6" fill="#a8c090"/><path d="M1.7 1 V10" stroke="#000" stroke-dasharray="1 1"/></svg>
<div class="t" style="left:327.5px;top:43.0px;font-size:11px;letter-spacing:0.15px">Listing:  httpd</div>
<svg style="left:1030px;top:44px" width="16" height="16" viewBox="0 0 16 16"><path d="M1 1 H7 L9.5 3.5 V11 H1Z" fill="#fafafa" stroke="#d0d0d0"/><path d="M7 5 H12.5 L15 7.5 V15.5 H7Z" fill="#fafafa" stroke="#d0d0d0"/></svg>
<svg style="left:1053px;top:44px" width="16" height="16" viewBox="0 0 16 16"><path d="M0.5 2 Q0.5 0.5 2 0.5 H8 L10.5 3 V11 H0.5Z" fill="#a4a4a4"/><path d="M6 5.5 H13 L15.5 8 V15.5 H6Z" fill="#9c9c9c"/></svg>
<div class="sep" style="left:1078px;top:43px;height:18px;background:#a0a0a0"></div>
<div class="a" style="left:1086px;top:41px;width:21px;height:23px;background:#fbfbfb;border-left:1px solid #a0a0a0;border-top:1px solid #a0a0a0;box-sizing:border-box"></div>
<svg style="left:1089px;top:44px" width="16" height="18" viewBox="0 0 16 18"><path d="M1 0.8 V11.5 L3.6 9 L5.6 13.5 L7.4 12.7 L5.4 8.4 H9Z" fill="#fff" stroke="#000" stroke-width="1"/><rect x="7.5" y="11" width="7.5" height="4.5" fill="#f0d848" stroke="#f4e890" stroke-width="0.6"/></svg>
<div class="sep" style="left:1113px;top:43px;height:18px;background:#a0a0a0"></div>
<svg style="left:1123px;top:44px" width="16" height="16" viewBox="0 0 16 16"><rect x="0.5" y="0.5" width="15" height="9" fill="#fff" stroke="#383838"/><path d="M0.5 3.5 H15.5 M0.5 6.5 H15.5 M5.5 0.5 V3.5 M10.5 0.5 V3.5 M8 3.5 V6.5 M5.5 6.5 V9.5 M10.5 6.5 V9.5" stroke="#383838" stroke-width="1"/><rect x="8.5" y="4" width="4" height="2" fill="#f0b030"/><path d="M8 9.5 V13" stroke="#383838" stroke-width="1.6"/><path d="M4.8 12 H11.2 L8 15.6Z" fill="#383838"/></svg>
<svg style="left:1146px;top:44px" width="16" height="16" viewBox="0 0 16 16"><rect x="0.5" y="1.5" width="4.5" height="13" fill="#f4f8fe" stroke="#88b4e4" stroke-width="0.9"/><rect x="11.5" y="1.5" width="4.5" height="13" fill="#f4f8fe" stroke="#88b4e4" stroke-width="0.9"/><path d="M1.5 4 H4 M1.5 6.5 H4 M1.5 9 H4 M12.5 4 H15 M12.5 6.5 H15 M12.5 9 H15 M12.5 11.5 H15" stroke="#a8c8ec" stroke-width="0.8"/><path d="M1 2.5 H4.5 M12 2.5 H15.5" stroke="#90c890" stroke-width="0.9"/><path d="M4.6 11 L7 9.6 L11.6 5.6" stroke="#2c8c2c" stroke-width="2.6" fill="none" stroke-linecap="round"/><path d="M4.6 11 L7 9.6 L11.6 5.6" stroke="#58c058" stroke-width="1.2" fill="none" stroke-linecap="round"/></svg>
<div class="sep" style="left:1171px;top:43px;height:18px;background:#a0a0a0"></div>
<svg style="left:1180.5px;top:44px" width="17" height="16" viewBox="0 0 17 16"><rect x="5.2" y="0.5" width="6.5" height="4.5" rx="1" fill="#282828"/><rect x="6.3" y="1.4" width="4.3" height="1.8" fill="#f0f0f0"/><rect x="0.5" y="3.5" width="16" height="11.6" rx="1.6" fill="#343434" stroke="#141414"/><circle cx="8.6" cy="9.8" r="3.8" fill="#141414" stroke="#606060" stroke-width="1"/><circle cx="7.9" cy="10.6" r="1.3" fill="#d8d8d8"/><rect x="1.6" y="5" width="2.6" height="1.4" fill="#686868"/></svg>
<div class="sep" style="left:1206px;top:43px;height:18px;background:#a0a0a0"></div>
<svg style="left:1216px;top:44px" width="17" height="17" viewBox="0 0 17 17"><rect x="0.8" y="1.2" width="11" height="14" fill="#f8f8f8" stroke="#202020" stroke-width="1" stroke-dasharray="1.6 1.2"/><path d="M3 4 H9 M3 6.5 H9" stroke="#90b0e0" stroke-width="1"/><rect x="3" y="9" width="6.5" height="4" fill="#5080c0"/><rect x="11.5" y="0.5" width="4.5" height="16" fill="#e8b840" stroke="#c89820" stroke-width="0.8"/></svg>
<svg style="left:1239px;top:50px" width="5" height="3" viewBox="0 0 5 3"><path d="M0 0 H5 L2.5 3Z" fill="#000"/></svg>
<div class="sep" style="left:1250px;top:43px;height:18px;background:#a0a0a0"></div>
<svg style="left:1257px;top:47px" width="11" height="10" viewBox="0 0 11 10"><path d="M1 1 L10 9 M10 1 L1 9" stroke="#000" stroke-width="2.3"/></svg>
<div class="a" style="left:304px;top:65px;width:17px;height:440px;background:#f0f0f0;"></div>
<div class="a" style="left:321px;top:65px;width:15px;height:440px;background:#fff;"></div>
<div class="a" style="left:336px;top:65px;width:2px;height:440px;background:#727272;"></div>
<div class="a" style="left:338px;top:65px;width:904px;height:260px;background:#e9f1fd;"></div>
<div class="a" style="left:306px;top:64px;width:969px;height:2px;background:#7a7e82;"></div>
<div class="a" style="left:338px;top:325px;width:905px;height:180px;background:#fff;"></div>
<div class="a" style="left:1243px;top:66px;width:16px;height:439px;background:#f0f0f0;"></div>
<div class="a" style="left:1259px;top:66px;width:16px;height:439px;background:#f2f2f2;"></div>
<div class="a" style="left:1275px;top:65px;width:1px;height:440px;background:#868686;"></div>
<svg style="left:1246.0px;top:72.5px" width="9" height="6" viewBox="0 0 9 6"><path d="M1 5 L4.5 1.5 L8 5" stroke="#505050" stroke-width="1.8" fill="none"/></svg>
<div class="a" style="left:1244px;top:132px;width:14px;height:11px;background:#c8c8c8;"></div>
<div class="a" style="left:1259px;top:132px;width:11px;height:3px;background:#e4e4e4;"></div>
<div class="a" style="left:1259px;top:155px;width:10px;height:6px;background:#e4b880;border:1px solid #f0a020;box-sizing:border-box"></div>
<div class="a" style="left:1259px;top:220.5px;width:10px;height:4.5px;background:#f4dc98;border:1px solid #f0c050;box-sizing:border-box"></div>
<div class="a" style="left:1259px;top:239.5px;width:10px;height:6px;background:#f4dc98;border:1px solid #f0c050;box-sizing:border-box"></div>
<div class="a" style="left:1259px;top:271px;width:10px;height:5px;background:#e4b880;border:1px solid #f0a020;box-sizing:border-box"></div>
<div class="a" style="left:1259px;top:279.5px;width:10px;height:5px;background:#e4b880;border:1px solid #f0a020;box-sizing:border-box"></div>
<div class="a" style="left:1259px;top:311.5px;width:10px;height:5px;background:#e4b880;border:1px solid #f0a020;box-sizing:border-box"></div>
<div class="a" style="left:1259px;top:337px;width:10px;height:5px;background:#e4b880;border:1px solid #f0a020;box-sizing:border-box"></div>
<div class="a" style="left:1259px;top:348.5px;width:10px;height:5px;background:#e4b880;border:1px solid #f0a020;box-sizing:border-box"></div>
<svg style="left:306px;top:306px" width="16" height="11" viewBox="0 0 16 11"><path d="M0 5.5 H13" stroke="#000" stroke-width="1.3"/><path d="M10.5 1.5 L15.5 5.5 L10.5 9.5Z" fill="#000"/></svg>
<div class="a" style="left:338px;top:66px;width:905px;height:439px;overflow:hidden">
<div class="m" style="left:554.5px;top:-12px;"><span class="g">00405e64</span><span class="b">(R)</span><span class="k">,</span></div>
<div class="m" style="left:554.5px;top:6px;"><span class="g">00405eac</span><span class="b">(R)</span><span class="k">,</span></div>
<div class="m" style="left:554.5px;top:24px;"><span class="g">00405ef4</span><span class="b">(R)</span><span class="k">,</span></div>
<div class="m" style="left:554.5px;top:42px;"><span class="g">00405f14</span><span class="b">(R)</span><span class="k">,</span></div>
<div class="m" style="left:554.5px;top:60px;"><span class="g">00405f78</span><span class="b">(R)</span><span class="k">,</span></div>
<div class="m" style="left:554.5px;top:78px;"><span class="g">00405f98</span><span class="b">(R)</span><span class="k">,</span></div>
<div class="m" style="left:554.5px;top:96px;"><span class="g">00405fd0</span><span class="b">(R)</span><span class="k">,</span></div>
<div class="m" style="left:554.5px;top:114px;"><span class="g">00405ff8</span><span class="b">(R)</span><span class="k">,</span></div>
<div class="m" style="left:554.5px;top:132px;"><span class="g">00406018</span><span class="b">(R)</span></div>
<div class="m" style="left:63.5px;top:150px;"><span class="p">http_parser_main</span></div>
<div class="m" style="left:401.5px;top:150px;"><span class="g">XREF[7]:</span></div>
<div class="m" style="left:491.5px;top:150px;"><span class="g">Entry Point</span><span class="k">(*), </span><span class="g">http_init_configByMsg:00402ea4</span><span class="k">(*),</span></div>
<div class="m" style="left:491.5px;top:168px;"><span class="g">http_init_configByMsg:00402ef8</span><span class="k">(*),</span></div>
<div class="m" style="left:491.5px;top:186px;"><span class="g">http_init_configByMsg:00402f38</span><span class="k">(*),</span></div>
<div class="m" style="left:491.5px;top:204px;"><span class="g">http_init_configByMsg:00402f64</span><span class="k">(*),</span></div>
<div class="m" style="left:491.5px;top:222px;"><span class="g">http_init_configByMsg:00402fa8</span><span class="k">(*), </span><span class="g">0042ac14</span><span class="k">(*)</span></div>
<div class="m" style="left:-4px;top:240px;"><span class="b">1c 3c</span></div>
<div class="m" style="left:85px;top:240px;"><span class="dk">lui</span></div>
<div class="m" style="left:184px;top:240px;"><span class="o">gp</span><span class="k">,</span><span class="tl">0x43</span></div>
<div class="m" style="left:4px;top:258px;"><span style="color:#a0a048">gp = &lt;UNKNOWN&gt;</span></div>
<div class="m" style="left:-4px;top:276px;"><span class="b">9c 27</span></div>
<div class="m" style="left:85px;top:276px;"><span class="dk">addiu</span></div>
<div class="m" style="left:184px;top:276px;"><span class="o">gp</span><span class="k">,</span><span class="o">gp</span><span class="k">,</span><span class="tl">0x2bd0</span></div>
<div class="m" style="left:-4px;top:294px;"><span class="b">bd 27</span></div>
<div class="m" style="left:85px;top:294px;"><span class="dk">addiu</span></div>
<div class="m" style="left:184px;top:294px;"><span class="o">sp</span><span class="k">,</span><span class="o">sp</span><span class="k">,</span><span class="tl">-0xa20</span></div>
<div class="m" style="left:-4px;top:312px;"><span class="b">99 8f</span></div>
<div class="m" style="left:85px;top:312px;"><span class="dk">lw</span></div>
<div class="m" style="left:184px;top:312px;"><span class="o">t9</span><span class="k">,</span><span class="tl">-0x7d48</span><span class="k">(</span><span class="o">gp</span><span class="k">)</span><span class="dk">=&gt;-&gt;&lt;EXTERNAL&gt;::memset</span></div>
<div class="m" style="left:524px;top:312px;"><span class="gy">= 00412fc0</span></div>
<div class="m" style="left:-4px;top:330px;"><span class="b">b3 af</span></div>
<div class="m" style="left:85px;top:330px;"><span class="dk">sw</span></div>
<div class="m" style="left:184px;top:330px;"><span class="o">s3</span><span class="k">,</span><span class="pu">local_1c</span><span class="k">(</span><span class="o">sp</span><span class="k">)</span></div>
<div class="m" style="left:-4px;top:348px;"><span class="b">80 00</span></div>
<div class="m" style="left:85px;top:348px;"><span class="dk">move</span></div>
<div class="m" style="left:184px;top:348px;"><span class="o">s3</span><span class="k">,</span><span class="o">a0</span></div>
<div class="m" style="left:-4px;top:366px;"><span class="b">04 3c</span></div>
<div class="m" style="left:85px;top:366px;"><span class="dk">lui</span></div>
<div class="m" style="left:184px;top:366px;"><span class="o">a0</span><span class="k">,</span><span class="tl">0x44</span></div>
<div class="m" style="left:-4px;top:384px;"><span class="b">bf af</span></div>
<div class="m" style="left:85px;top:384px;"><span class="dk">sw</span></div>
<div class="m" style="left:184px;top:384px;"><span class="o">ra</span><span class="k">,</span><span class="pu">local_4</span><span class="k">(</span><span class="o">sp</span><span class="k">)</span></div>
<div class="m" style="left:-4px;top:402px;"><span class="b">bc af</span></div>
<div class="m" style="left:85px;top:402px;"><span class="dk">sw</span></div>
<div class="m" style="left:184px;top:402px;"><span class="o">gp</span><span class="dk">=&gt;_mips_gp0_value</span><span class="k">,</span><span class="pu">local_a10</span><span class="k">(</span><span class="o">sp</span><span class="k">)</span></div>
<div class="m" style="left:524px;top:402px;"><span class="gy">= ??</span></div>
<div class="m" style="left:-4px;top:420px;"><span class="b">84 24</span></div>
<div class="m" style="left:85px;top:420px;"><span class="dk">addiu</span></div>
<div class="m" style="left:184px;top:420px;"><span class="o">a0</span><span class="dk">=&gt;DAT_0043f764</span><span class="k">,</span><span class="o">a0</span><span class="k">,</span><span class="tl">-0x89c</span></div>
<div class="m" style="left:524px;top:420px;"><span class="gy">= ??</span></div>
</div>
<div class="a" style="left:355px;top:188px;width:871px;height:141px;background:transparent;border:6px solid #ff0000;box-sizing:border-box"></div>
<div class="a" style="left:1276px;top:36px;width:9px;height:469px;background:#f0f0f0;"></div>
<div class="a" style="left:1279px;top:38px;width:4px;height:467px;background:linear-gradient(90deg,#c8c8c8 0,#b2b2b2 50%,#bcbcbc 100%);"></div>
<div class="a" style="left:1285px;top:40px;width:397px;height:465px;background:#fff;border:1px solid #868686;box-sizing:border-box"></div>
<div class="a" style="left:1286px;top:41px;width:395px;height:24px;background:#fff;"></div>
<div class="a" style="left:1287px;top:42px;width:394px;height:22px;background:linear-gradient(90deg,#9c9c9c 0%,#b0b0b0 25%,#cccccc 45%,#e8e8e8 60%,#f2f2f2 70%,#f2f2f2 100%);"></div>
<div class="a" style="left:1286px;top:64px;width:395px;height:1px;background:#767676;"></div>
<div class="a" style="left:1288.5px;top:42px;font:bold 16px/18px 'Liberation Sans',sans-serif;color:#3c8cf0;-webkit-text-stroke:0.7px #3c8cf0">C</div>
<div class="a" style="left:1298px;top:47px;font:italic bold 13px/14px 'Liberation Serif',serif;color:#d010c8;-webkit-text-stroke:0.5px #d010c8">f</div>
<div class="t" style="left:1307.5px;top:43.0px;font-size:11px;letter-spacing:-0.03px">Decompile: http_parser_main -  (httpd)</div>
<svg style="left:1512px;top:44px" width="16" height="16" viewBox="0 0 16 16"><g id="rf"><path d="M13.6 6 C12.4 1.6 6.6 0.4 3.9 3.6 L2.2 2.2 L0.6 8.6 L7.4 7.4 L5.8 5.6 C7.4 3.6 10.2 4.4 10.8 6.8 Z" fill="#28c828" stroke="#0c8c14" stroke-width="0.9" stroke-linejoin="round"/></g><path transform="rotate(180 8 8)" d="M13.6 6 C12.4 1.6 6.6 0.4 3.9 3.6 L2.2 2.2 L0.6 8.6 L7.4 7.4 L5.8 5.6 C7.4 3.6 10.2 4.4 10.8 6.8 Z" fill="#28c828" stroke="#0c8c14" stroke-width="0.9" stroke-linejoin="round"/></svg>
<div class="sep" style="left:1537px;top:43px;height:18px;background:#a0a0a0"></div>
<svg style="left:1546.5px;top:44px" width="17" height="16" viewBox="0 0 17 16"><path d="M1 1 H7 L9.5 3.5 V11 H1Z" fill="#fafafa" stroke="#d4d4d4"/><path d="M7 5 H12.5 L15 7.5 V15.5 H7Z" fill="#fafafa" stroke="#d4d4d4"/></svg>
<div class="sep" style="left:1572px;top:43px;height:18px;background:#a0a0a0"></div>
<svg style="left:1582.5px;top:44px" width="16" height="16" viewBox="0 0 16 16"><rect x="0.5" y="1.5" width="13" height="14" fill="#e4f0fc" stroke="#6898d8"/><rect x="2" y="11" width="10" height="3" fill="#6aa0e0"/><path d="M4 10.5 L5 7.5 L12 0.8 L14.5 3.2 L7.5 10Z" fill="#f0b850" stroke="#c08828" stroke-width="0.7"/></svg>
<div class="sep" style="left:1607px;top:43px;height:18px;background:#a0a0a0"></div>
<svg style="left:1617px;top:44px" width="17" height="16" viewBox="0 0 17 16"><rect x="5.2" y="0.5" width="6.5" height="4.5" rx="1" fill="#282828"/><rect x="6.3" y="1.4" width="4.3" height="1.8" fill="#f0f0f0"/><rect x="0.5" y="3.5" width="16" height="11.6" rx="1.6" fill="#343434" stroke="#141414"/><circle cx="8.6" cy="9.8" r="3.8" fill="#141414" stroke="#606060" stroke-width="1"/><circle cx="7.9" cy="10.6" r="1.3" fill="#d8d8d8"/><rect x="1.6" y="5" width="2.6" height="1.4" fill="#686868"/></svg>
<div class="sep" style="left:1637px;top:43px;height:18px;background:#a0a0a0"></div>
<svg style="left:1645px;top:49px" width="10" height="5" viewBox="0 0 10 5"><path d="M0 0 H10 L5 5Z" fill="#000"/></svg>
<svg style="left:1667.5px;top:47px" width="11" height="10" viewBox="0 0 11 10"><path d="M1 1 L10 9 M10 1 L1 9" stroke="#000" stroke-width="2.3"/></svg>
<div class="a" style="left:1286px;top:65px;width:395px;height:440px;background:#fff;"></div>
<div class="a" style="left:1286px;top:64px;width:395px;height:2px;background:#7a7e82;"></div>
<div class="a" style="left:1314px;top:65px;width:1px;height:440px;background:#a8a8a8;"></div>
<div class="a" style="left:1669px;top:66px;width:12px;height:439px;background:#f0f0f0;"></div>
<div class="a" style="left:1670px;top:84px;width:11px;height:21px;background:#c8c8c8;"></div>
<svg style="left:1672.0px;top:72.5px" width="9" height="6" viewBox="0 0 9 6"><path d="M1 5 L4.5 1.5 L8 5" stroke="#505050" stroke-width="1.8" fill="none"/></svg>
<div class="a" style="left:1286px;top:66px;width:383px;height:439px;overflow:hidden">
<div class="m" style="left:15px;top:0px;"><span style="color:#787878">1</span></div>
<div class="m" style="left:15px;top:18px;"><span style="color:#787878">2</span></div>
<div class="m" style="left:15px;top:36px;"><span style="color:#787878">3</span></div>
<div class="m" style="left:15px;top:54px;"><span style="color:#787878">4</span></div>
<div class="m" style="left:15px;top:72px;"><span style="color:#787878">5</span></div>
<div class="m" style="left:15px;top:90px;"><span style="color:#787878">6</span></div>
<div class="m" style="left:15px;top:108px;"><span style="color:#787878">7</span></div>
<div class="m" style="left:15px;top:126px;"><span style="color:#787878">8</span></div>
<div class="m" style="left:15px;top:144px;"><span style="color:#787878">9</span></div>
<div class="m" style="left:8px;top:162px;"><span style="color:#787878">10</span></div>
<div class="m" style="left:8px;top:180px;"><span style="color:#787878">11</span></div>
<div class="m" style="left:8px;top:198px;"><span style="color:#787878">12</span></div>
<div class="m" style="left:8px;top:216px;"><span style="color:#787878">13</span></div>
<div class="m" style="left:8px;top:234px;"><span style="color:#787878">14</span></div>
<div class="m" style="left:8px;top:252px;"><span style="color:#787878">15</span></div>
<div class="m" style="left:8px;top:270px;"><span style="color:#787878">16</span></div>
<div class="m" style="left:8px;top:288px;"><span style="color:#787878">17</span></div>
<div class="m" style="left:8px;top:306px;"><span style="color:#787878">18</span></div>
<div class="m" style="left:8px;top:324px;"><span style="color:#787878">19</span></div>
<div class="m" style="left:8px;top:342px;"><span style="color:#787878">20</span></div>
<div class="m" style="left:8px;top:360px;"><span style="color:#787878">21</span></div>
<div class="m" style="left:8px;top:378px;"><span style="color:#787878">22</span></div>
<div class="m" style="left:8px;top:396px;"><span style="color:#787878">23</span></div>
<div class="m" style="left:8px;top:414px;"><span style="color:#787878">24</span></div>
<div class="m" style="left:8px;top:432px;"><span style="color:#787878">25</span></div>
<div class="m" style="left:31px;top:18px;"><span style="color:#8a22c8">/* WARNING: Could not reconcile some variable over</span></div>
<div class="a" style="left:31px;top:55px;width:70px;height:17px;background:#ffff90;"></div>
<div class="a" style="left:80.5px;top:55px;width:2px;height:17px;background:#f07878;"></div>
<div class="m" style="left:31px;top:54px;"><span class="ty">undefined4</span><span class="k"> </span><span class="fn">http_parser_main</span><span class="k">(</span><span class="ty">int</span><span class="k"> </span><span class="pu2">param_1</span><span class="k">)</span></div>
<div class="m" style="left:31px;top:90px;"><span class="k">{</span></div>
<div class="m" style="left:31px;top:108px;"><span class="k">  </span><span class="ty">char</span><span class="k"> </span><span class="vr">cVar1</span><span class="k">;</span></div>
<div class="m" style="left:31px;top:126px;"><span class="k">  </span><span class="ty">bool</span><span class="k"> </span><span class="vr">bVar2</span><span class="k">;</span></div>
<div class="m" style="left:31px;top:144px;"><span class="k">  </span><span class="ty">uint</span><span class="k"> </span><span class="vr">uVar3</span><span class="k">;</span></div>
<div class="m" style="left:31px;top:162px;"><span class="k">  </span><span class="ty">code</span><span class="k"> *</span><span class="vr">pcVar4</span><span class="k">;</span></div>
<div class="m" style="left:31px;top:180px;"><span class="k">  </span><span class="ty">uint</span><span class="k"> </span><span class="vr">uVar5</span><span class="k">;</span></div>
<div class="m" style="left:31px;top:198px;"><span class="k">  </span><span class="ty">uint</span><span class="k"> </span><span class="vr">uVar6</span><span class="k">;</span></div>
<div class="m" style="left:31px;top:216px;"><span class="k">  </span><span class="ty">int</span><span class="k"> </span><span class="vr">iVar7</span><span class="k">;</span></div>
<div class="m" style="left:31px;top:234px;"><span class="k">  </span><span class="ty">char</span><span class="k"> *</span><span class="vr">pcVar8</span><span class="k">;</span></div>
<div class="m" style="left:31px;top:252px;"><span class="k">  </span><span class="ty">char</span><span class="k"> *</span><span class="vr">pcVar9</span><span class="k">;</span></div>
<div class="m" style="left:31px;top:270px;"><span class="k">  </span><span class="ty">size_t</span><span class="k"> </span><span class="vr">sVar10</span><span class="k">;</span></div>
<div class="m" style="left:31px;top:288px;"><span class="k">  </span><span class="ty">int</span><span class="k"> </span><span class="vr">iVar11</span><span class="k">;</span></div>
<div class="m" style="left:31px;top:306px;"><span class="k">  </span><span class="ty">long</span><span class="k"> </span><span class="vr">lVar12</span><span class="k">;</span></div>
<div class="m" style="left:31px;top:324px;"><span class="k">  </span><span class="ty">char</span><span class="k"> *</span><span class="vr">pcVar13</span><span class="k">;</span></div>
<div class="m" style="left:31px;top:342px;"><span class="k">  </span><span class="ty">uint</span><span class="k"> *</span><span class="vr">puVar14</span><span class="k">;</span></div>
<div class="m" style="left:31px;top:360px;"><span class="k">  </span><span class="ty">undefined</span><span class="k"> **</span><span class="vr">ppuVar15</span><span class="k">;</span></div>
<div class="m" style="left:31px;top:378px;"><span class="k">  </span><span class="ty">undefined1</span><span class="k"> *</span><span class="vr">puVar16</span><span class="k">;</span></div>
<div class="m" style="left:31px;top:396px;"><span class="k">  </span><span class="ty">undefined4</span><span class="k"> </span><span class="vr">uVar17</span><span class="k">;</span></div>
<div class="m" style="left:31px;top:414px;"><span class="k">  </span><span class="ty">uint</span><span class="k"> </span><span class="vr">uVar18</span><span class="k">;</span></div>
<div class="m" style="left:31px;top:432px;"><span class="k">  </span><span class="ty">uint</span><span class="k"> </span><span class="vr">uVar19</span><span class="k">;</span></div>
</div>
<div class="a" style="left:1286px;top:110px;width:343px;height:40px;background:transparent;border:6px solid #ff0000;box-sizing:border-box"></div>
<div class="a" style="left:0px;top:0px;width:1px;height:505px;background:#000;"></div>
<div class="a" style="left:1681px;top:0px;width:8px;height:505px;background:#2b2b2b;"></div>
</body></html>
